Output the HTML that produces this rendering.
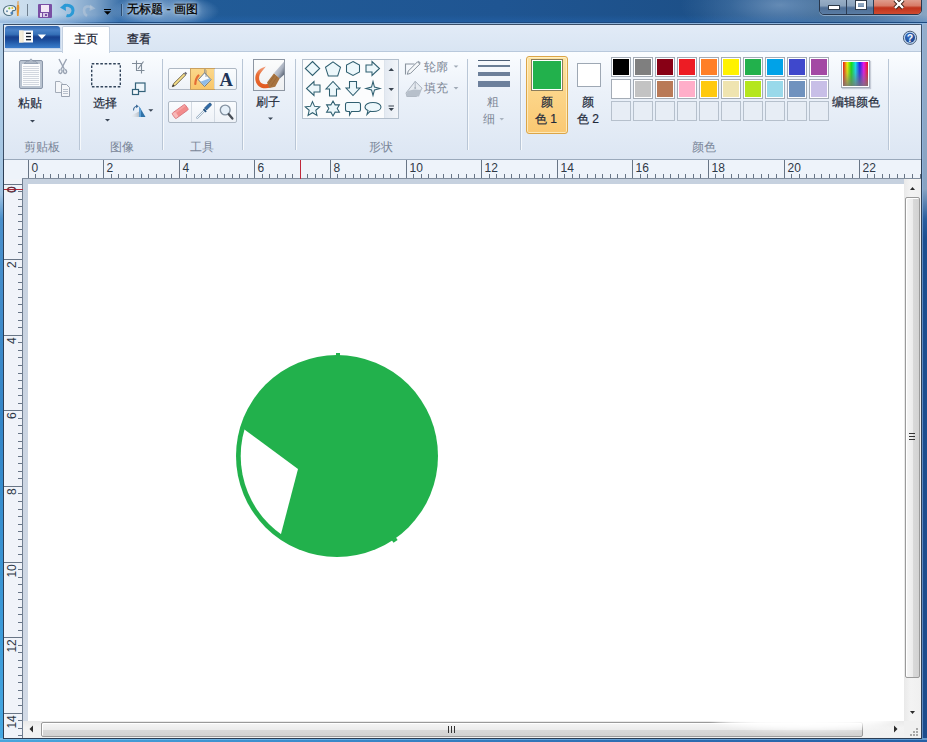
<!DOCTYPE html>
<html><head><meta charset="utf-8">
<style>
*{margin:0;padding:0;box-sizing:border-box}
html,body{width:927px;height:742px;overflow:hidden;background:#2a66a8;font-family:"Liberation Sans",sans-serif}
.a{position:absolute}
#title{left:0;top:0;width:927px;height:24px;background:linear-gradient(90deg,#d3e3f0 0px,#c0d6ea 50px,#7ea3c9 95px,#3f73aa 120px,#215b97 200px,#1f5592 500px,#1d5088 700px,#2a5a90 790px,#41688f 830px,#6b8db1 900px,#8aa6c3 927px)}
#frameL{left:0;top:24px;width:3px;height:718px;background:linear-gradient(180deg,#b5d0e8 0,#a2c4e2 170px,#4a90cc 195px,#3486c8 400px,#3c9ad8 600px,#46a8e2 718px)}
#frameR{left:922px;top:24px;width:5px;height:718px;background:linear-gradient(180deg,#95aecb 0,#87a3c2 165px,#2a5e9e 195px,#1d4f90 215px,#1c4c8c 742px);box-shadow:inset 1px 0 0 rgba(150,190,235,.55)}
#frameB{left:0;top:738px;width:927px;height:4px;background:linear-gradient(90deg,#48a6dc,#3a8ccc 300px,#2e70b4 600px,#2460a6 927px);box-shadow:inset 0 2px 0 rgba(160,210,245,.5)}
#ribbon{left:3px;top:24px;width:919px;height:136px;border:1px solid #3b4e66;border-bottom:none;border-radius:3px 3px 0 0;background:#dfe9f5}
#tabrow{left:4px;top:25px;width:917px;height:27px;background:linear-gradient(180deg,#e2ebf7,#d9e5f3);border-bottom:1px solid #b9c9dc}
#body{left:4px;top:52px;width:917px;height:107px;background:linear-gradient(180deg,#fbfdff 0,#ebf1f9 40px,#dce6f3 107px)}
#appbtn{left:5px;top:26px;width:55px;height:22px;border-radius:3px 3px 0 0;background:linear-gradient(180deg,#2f64ad 0,#4a82c8 18%,#3570b8 38%,#17408e 50%,#1a4a98 62%,#2d6bb9 85%,#3b7ccb 100%);box-shadow:1px 1px 0 #c2d4ea}
#tab1{left:62px;top:26px;width:48px;height:27px;border:1px solid #c3d0e0;border-bottom:none;border-radius:2px 2px 0 0;background:linear-gradient(180deg,#ffffff,#fbfdff)}
.tabt{font-size:12px;color:#1a2230;line-height:14px;-webkit-text-stroke:.25px #1a2230}
#ruler{left:4px;top:159px;width:917px;height:20px;background:#eef3fa;border-top:1px solid #9aa9bb}
#vruler{left:4px;top:179px;width:19px;height:559px;background:#f0f3f9;border-right:1px solid #717f91}
#work{left:23px;top:179px;width:881px;height:543px;background:linear-gradient(180deg,#c6d1df,#d2dae6)}
#canvas{left:28px;top:184px;width:876px;height:538px;background:#fff}
#vscroll{left:904px;top:179px;width:17px;height:543px;background:linear-gradient(90deg,#e9e9e9,#f3f3f3 40%,#f0f0f0)}
#hscroll{left:23px;top:721px;width:881px;height:17px;background:linear-gradient(180deg,#e9e9e9,#f3f3f3 40%,#f0f0f0)}
#grip{left:904px;top:721px;width:17px;height:17px;background:#f0f0f0}
.lbl{font-size:12px;color:#7a8698;line-height:14px;white-space:nowrap}
.txt{font-size:12px;color:#1e2a3a;line-height:14px;white-space:nowrap;-webkit-text-stroke:.2px #1e2a3a}
.pc{width:20px;height:20px;border:1px solid #a4acb6;background:#fff;padding:1px}.pc i{display:block;width:16px;height:16px}.pe{background:#e7edf5;border-color:#b6c0cc}
.sep{width:1px;height:91px;top:59px;background:#b9c6d6;box-shadow:1px 0 0 #f6f9fc}
</style></head><body>
<div id="title" class="a"></div>
<div class="a" style="left:0;top:0;width:927px;height:24px;background:linear-gradient(180deg,rgba(255,255,255,0) 0,rgba(255,255,255,0) 62%,rgba(40,110,190,0.3) 90%,rgba(40,110,190,0.3) 100%)"></div>
<div class="a" style="left:110px;top:-6px;width:110px;height:34px;border-radius:50%;background:radial-gradient(ellipse at center,rgba(190,215,240,0.55) 0,rgba(170,200,235,0.35) 45%,rgba(120,160,210,0) 70%)"></div>
<div class="a" style="left:680px;top:-30px;width:200px;height:70px;background:radial-gradient(closest-side,rgba(150,180,212,0.55) 0,rgba(120,160,200,0.25) 50%,rgba(120,160,200,0) 100%)"></div>
<div class="a" style="left:0;top:22px;width:927px;height:1px;background:linear-gradient(90deg,rgba(28,74,128,0) 0,rgba(28,74,128,0) 70px,rgba(28,74,128,1) 130px)"></div>
<div class="a" style="left:0;top:23px;width:927px;height:1px;background:linear-gradient(90deg,rgba(200,225,245,.6) 0,rgba(143,180,220,1) 130px)"></div>
<svg class="a" style="left:0;top:0" width="130" height="24">
 <!-- palette -->
 <path d="M10.5 5.5c3.2 0 5.2 1.6 5.2 3.6 0 1.3-1.2 1.6-2.2 1.5-1.1-.1-1.6.8-1 1.7.6 1-.2 3.2-3.1 3.2-3.6 0-5.9-2.2-5.9-5 0-2.9 3-5 7-5z" fill="#eef4f6" stroke="#4f6f80" stroke-width="1.1"/>
 <circle cx="9.3" cy="8.3" r="1.1" fill="#7cc04a"/><circle cx="12.3" cy="8" r="1" fill="#e8c430"/><circle cx="7" cy="11.3" r="1" fill="#6a8fb0"/><circle cx="11.6" cy="13" r="1.2" fill="#4f86c2"/>
 <path d="M17.6 1.5 L18.8 1.5 L19.3 8 L18.6 16 L17 16 L16.6 8 Z" fill="#e5932e"/>
 <path d="M17.4 1.3 L19 1.3 L19.1 5 L16.9 5 Z" fill="#d8b890"/>
 <rect x="27" y="4" width="1" height="12" fill="#6f8090"/>
 <!-- save -->
 <rect x="38" y="4" width="14" height="14" rx="1" fill="#7a4fa4"/>
 <rect x="41" y="5" width="8" height="7" fill="#f3e8f6"/>
 <rect x="40" y="13" width="2" height="4" fill="#e8dcef"/><rect x="43" y="13" width="5" height="4" fill="#d9c8e6"/><rect x="45" y="14" width="2" height="2" fill="#7a4fa4"/>
 <!-- undo -->
 <path d="M63.5 6.5 C67 4.2 73 5.5 73 10.5 C73 14.5 69.5 16.5 66.5 15.5" fill="none" stroke="#2b9ad6" stroke-width="3"/>
 <path d="M60 7.5 L65.5 3.5 L66 11 Z" fill="#2b9ad6"/>
 <!-- redo grey -->
 <path d="M92 8 C89 5.5 84 6 84 10.5 C84 13 85.5 15 87 16" fill="none" stroke="#b9c9d9" stroke-width="2.6" opacity="0.55"/>
 <path d="M95.5 8.5 L90 4.5 L89.5 11 Z" fill="#b9c9d9" opacity="0.55"/>
 <!-- dropdown -->
 <rect x="104" y="9" width="7" height="1" fill="#000"/>
 <path d="M104 11.3 L111 11.3 L107.5 14.8 Z" fill="#000"/>
 <rect x="121" y="4" width="1" height="12" fill="#2a4a70"/><rect x="122" y="4" width="1" height="12" fill="#8fb0d0" opacity=".6"/>
</svg>
<div class="a" style="left:127px;top:2px;font-size:12.4px;line-height:14px;color:#000;-webkit-text-stroke:.3px #000;white-space:nowrap;text-shadow:0 0 8px rgba(210,230,250,0.95),0 0 4px rgba(220,235,250,0.9),0 0 2px rgba(230,240,250,0.6)">无标题 - 画图</div>
<!-- window buttons -->
<div class="a" style="left:819px;top:-3px;width:103px;height:18px;border:1px solid #28374d;border-radius:0 0 5px 5px;overflow:hidden;box-shadow:0 1px 0 rgba(190,210,230,.55),inset 0 0 0 1px rgba(220,230,240,.35)">
 <div class="a" style="left:0;top:0;width:27px;height:17px;background:linear-gradient(180deg,#9db2c8 0,#8aa2bc 45%,#4f6f96 58%,#5b7ea6 100%);border-right:1px solid #2c3d55"></div>
 <div class="a" style="left:27px;top:0;width:27px;height:17px;background:linear-gradient(180deg,#9db2c8 0,#8aa2bc 45%,#4f6f96 58%,#5b7ea6 100%);border-right:1px solid #2c3d55"></div>
 <div class="a" style="left:54px;top:0;width:47px;height:17px;background:linear-gradient(180deg,#e2a89a 0,#d87c68 45%,#c0331c 58%,#d24e33 100%)"></div>
</div>
<svg class="a" style="left:819px;top:0" width="103" height="16">
 <rect x="9.5" y="5.5" width="11" height="4" fill="#fff" stroke="#2e3a48" stroke-width="1"/>
 <rect x="36.5" y="0.5" width="11" height="9" fill="none" stroke="#2e3a48" stroke-width="1"/>
 <rect x="38" y="2" width="8" height="6" fill="none" stroke="#fff" stroke-width="2"/>
 <path d="M76 0 L84 8 M84 0 L76 8" stroke="#3a2018" stroke-width="4.2"/>
 <path d="M76 0 L84 8 M84 0 L76 8" stroke="#fff" stroke-width="2.4"/>
</svg>
<div id="frameL" class="a"></div>
<div id="frameR" class="a"></div>
<div id="frameB" class="a"></div>
<div id="ribbon" class="a"></div>
<div id="tabrow" class="a"></div>
<div id="body" class="a"></div>
<div id="appbtn" class="a"></div>
<svg class="a" style="left:0;top:24px" width="70" height="30">
 <rect x="19" y="6.5" width="14" height="12" fill="#fbfcfd"/>
 <rect x="19" y="6.5" width="3.5" height="12" fill="#f5eedb"/>
 <rect x="22.5" y="6.5" width="1" height="12" fill="#e6dcc0"/>
 <rect x="26" y="8.6" width="5" height="1.4" fill="#1c2430"/><rect x="26" y="11.9" width="5" height="1.4" fill="#1c2430"/><rect x="26" y="15" width="5" height="1.4" fill="#1c2430"/>
 <path d="M37.7 10.6 L46 10.6 L41.85 14.9 Z" fill="#fff"/>
</svg>
<div id="tab1" class="a"></div>
<div class="a tabt" style="left:74px;top:32px">主页</div>
<div class="a tabt" style="left:127px;top:32px">查看</div>

<!-- ===== RIBBON BODY CONTENT ===== -->
<!-- separators -->
<div class="a sep" style="left:79px"></div>
<div class="a sep" style="left:162px"></div>
<div class="a sep" style="left:242px"></div>
<div class="a sep" style="left:295px"></div>
<div class="a sep" style="left:467px"></div>
<div class="a sep" style="left:520px"></div>
<div class="a sep" style="left:888px"></div>
<!-- group labels -->
<div class="a lbl" style="left:24px;top:140px">剪贴板</div>
<div class="a lbl" style="left:110px;top:140px">图像</div>
<div class="a lbl" style="left:190px;top:140px">工具</div>
<div class="a lbl" style="left:369px;top:140px">形状</div>
<div class="a lbl" style="left:692px;top:140px">颜色</div>
<!-- clipboard group -->
<svg class="a" style="left:0;top:52px" width="80" height="75">
 <rect x="19.5" y="8.5" width="23" height="28" rx="1.5" fill="#b9c3d0" stroke="#8a96a8"/>
 <rect x="22" y="12" width="18" height="22" fill="#fbfcfd"/>
 <g fill="#d2d7df"><rect x="23" y="14" width="16" height="1"/><rect x="23" y="16" width="16" height="1"/><rect x="23" y="18" width="16" height="1"/><rect x="23" y="20" width="16" height="1"/><rect x="23" y="22" width="16" height="1"/><rect x="23" y="24" width="16" height="1"/><rect x="23" y="26" width="16" height="1"/><rect x="23" y="28" width="16" height="1"/><rect x="23" y="30" width="16" height="1"/><rect x="23" y="32" width="16" height="1"/></g>
 <path d="M24 11.5 L27 9 L29 9 L31 6.8 L33 9 L35 9 L38 11.5 Z" fill="#aeb8c6" stroke="#8d99ab" stroke-width=".8"/>
 <path d="M30 68 L35 68 L32.5 70.5 Z" fill="#3a4656"/>
 <!-- scissors -->
 <g stroke="#98a2b2" stroke-width="1.4" fill="none"><path d="M59 7 L64.5 17.5"/><path d="M66.5 7 L61 17.5"/><path d="M60.5 17.5 C58.5 18 58.2 21.3 60.3 21.5 C62.2 21.7 62.5 18.5 61.5 17.5"/><path d="M65 17.5 C67 18 67.3 21.3 65.2 21.5 C63.3 21.7 63 18.5 64 17.5"/></g>
 <!-- copy -->
 <path d="M55.5 29.5 H60 L62 31.5 V40.5 H55.5 Z" fill="#f4f6f9" stroke="#a4acb8"/>
 <path d="M61.5 32.5 H66.5 L69.5 35.5 V44.5 H61.5 Z" fill="#f4f6f9" stroke="#9aa3b1"/>
 <g fill="#b8c0cc"><rect x="63" y="37" width="5" height="1"/><rect x="63" y="39" width="5" height="1"/><rect x="63" y="41" width="5" height="1"/></g>
</svg>
<div class="a txt" style="left:18px;top:96px">粘贴</div>

<!-- image group -->
<svg class="a" style="left:80px;top:52px" width="82" height="75">
 <rect x="11.7" y="11.7" width="28.6" height="23" fill="none" stroke="#34465c" stroke-width="1.4" stroke-dasharray="2.6 1.7"/>
 <path d="M25 67 L30 67 L27.5 69.5 Z" fill="#3a4656"/>
 <!-- crop -->
 <g stroke="#7f8b98" stroke-width="1.1" fill="none"><path d="M56.5 8.5 V18.5 H64.5"/><path d="M52 11.5 H61.5 V21.5"/><path d="M58 17 L63.5 9.5"/></g>
 <!-- resize -->
 <rect x="55.5" y="31" width="9.5" height="8.5" fill="#eef6fb" stroke="#33627a" stroke-width="1.2"/>
 <rect x="52.5" y="37.5" width="6" height="5" fill="#f4f9fc" stroke="#33627a" stroke-width="1.2"/>
 <!-- rotate -->
 <defs><linearGradient id="rg" x1="0" y1="0" x2="1" y2="0"><stop offset="0" stop-color="#ffffff" stop-opacity="0"/><stop offset="1" stop-color="#b9c0c8"/></linearGradient></defs>
 <path d="M48 65 L59 59.5 L59 65 Z" fill="url(#rg)"/>
 <path d="M59.3 65 L59.3 54.5 L65.5 65 Z" fill="#2f72a8"/>
 <path d="M59.3 65 L59.3 54.5 L61 57.5 L61 65 Z" fill="#5aa0d8"/>
 <path d="M53.5 58.5 C53.5 56 55 54.5 57 54.3" stroke="#3a6a98" stroke-width="1.1" fill="none"/>
 <path d="M56 52.5 L58.8 54.3 L56.2 56.2 Z" fill="#3a6a98"/>
 <path d="M68.3 57.3 L73.3 57.3 L70.8 59.7 Z" fill="#3a4656"/>
</svg>
<div class="a txt" style="left:93px;top:96px">选择</div>

<!-- tools group -->
<div class="a" style="left:168px;top:68px;width:69px;height:22px;border:1px solid #aeb8c4;border-radius:2px;background:linear-gradient(180deg,#fafcfe,#eef2f7)"></div>
<div class="a" style="left:168px;top:101px;width:69px;height:22px;border:1px solid #aeb8c4;border-radius:2px;background:linear-gradient(180deg,#fafcfe,#eef2f7)"></div>
<div class="a" style="left:190px;top:68px;width:25px;height:22px;border:1px solid #c9a060;background:linear-gradient(180deg,#fbd78a,#f8c66a)"></div>
<div class="a" style="left:191px;top:102px;width:1px;height:20px;background:#d3dae3"></div>
<div class="a" style="left:214px;top:102px;width:1px;height:20px;background:#d3dae3"></div>
<div class="a" style="left:214px;top:69px;width:1px;height:20px;background:#d3dae3"></div>
<svg class="a" style="left:160px;top:52px" width="85" height="75">
 <!-- pencil -->
 <path d="M12.3 34.7 L13.6 31.6 L24 21.3 L25.7 23 L15.4 33.4 Z" fill="#f6e08a" stroke="#4a3e2a" stroke-width=".75" stroke-linejoin="round"/>
 <path d="M12.3 34.7 L13 32.6 L14.4 34 Z" fill="#222"/>
 <path d="M24 21.3 L25.5 19.8 L27.2 21.5 L25.7 23 Z" fill="#707078"/>
 <!-- fill bucket -->
 <path d="M38.5 23.5 C36.5 25.5 35.5 28.5 35.3 32" stroke="#e05a28" stroke-width="2.2" fill="none" stroke-linecap="round" opacity=".85"/>
 <path d="M44.6 20.8 L51 27.7 L44.6 34.5 L38.3 27.7 Z" fill="#f6f9fc" stroke="#5a6e80" stroke-width=".9"/>
 <path d="M40.5 29.8 L49.6 26.2 L50.3 27.7 L44.6 33.7 Z" fill="#8fbbe8"/>
 <path d="M44.6 21 L44.6 17.5 C45.5 17.3 46 18 46 19 L46 25" stroke="#7a8088" stroke-width=".7" fill="none"/>
 <!-- A -->
 <text x="59.5" y="34" font-family="Liberation Serif" font-weight="bold" font-size="18.5" fill="#1e3356">A</text>
 <!-- eraser -->
 <g transform="translate(20.2 59.5) rotate(-36)"><rect x="-8" y="-3.3" width="16" height="6.6" rx="1.3" fill="#f28b8b" stroke="#d66e76" stroke-width=".8"/><rect x="-7.6" y="-2.9" width="3.5" height="5.8" rx="1" fill="#f8c4c4" opacity=".8"/><rect x="-4" y="-2.9" width="11.5" height="1.8" fill="#f7b0b0" opacity=".6"/></g>
 <!-- picker -->
 <path d="M37.2 65.8 L46 57" stroke="#9cb0c4" stroke-width="2.2" stroke-linecap="round"/>
 <path d="M37.2 65.8 L46 57" stroke="#f4f8fb" stroke-width="1" stroke-linecap="round"/>
 <path d="M44.5 56 L49 51.5 C50.5 50.5 52 52 51 53.5 L46.5 58 Z" fill="#2e6aa8" stroke="#23507e" stroke-width=".8"/>
 <path d="M43.5 57.2 L46.2 59.8" stroke="#23507e" stroke-width="1.6"/>
 <!-- magnifier -->
 <circle cx="65.2" cy="58" r="4.9" fill="#e6f0f9" stroke="#8593a2" stroke-width="1.4"/>
 <path d="M68.8 62.2 L72.4 66.6" stroke="#484e56" stroke-width="2.3" stroke-linecap="round"/>
</svg>

<!-- brushes -->
<div class="a" style="left:253px;top:59px;width:32px;height:32px;border:1px solid #8d96a2;background:linear-gradient(180deg,#fbfcfc,#eef0f2)"></div>
<svg class="a" style="left:253px;top:59px" width="32" height="32">
 <defs><linearGradient id="fer" x1="0" y1="0" x2="1" y2="1"><stop offset="0" stop-color="#e8ecf2"/><stop offset=".6" stop-color="#aab2c0"/><stop offset="1" stop-color="#3a4658"/></linearGradient>
 <linearGradient id="strk" x1="0" y1="0" x2="0" y2="1"><stop offset="0" stop-color="#f0a080"/><stop offset=".4" stop-color="#e86a30"/><stop offset="1" stop-color="#e25a20"/></linearGradient></defs>
 <path d="M12.8 7.6 C9 8.5 5.5 10.5 3.5 14 C1.5 18 2 23 5 26.5 C8 29.5 13 30 17.5 28.5 L16 24.5 C12 26 8.5 25 7 22.5 C5.5 20 5.8 16 8 13.5 C9.5 11.5 11.5 9.8 12.8 7.6 Z" fill="url(#strk)"/>
 <path d="M14 23.5 L21 14.2 L26.8 19.2 L22.2 27.8 L16.5 29 Z" fill="#a87440"/>
 <path d="M15.5 25 L21.5 16.5 M18 27 L24 18" stroke="#8a5a2a" stroke-width=".7" opacity=".6"/>
 <path d="M21 13.9 L31.2 2.5 L31.2 15.6 L26.8 19.4 Z" fill="url(#fer)"/>
</svg>
<div class="a txt" style="left:256px;top:95px">刷子</div>
<svg class="a" style="left:265px;top:114px" width="12" height="8"><path d="M3 3.5 L8 3.5 L5.5 6 Z" fill="#3a4656"/></svg>

<!-- shapes gallery -->
<div class="a" style="left:302px;top:59px;width:97px;height:60px;border:1px solid #b3bfcc;background:#fbfcfd"></div>
<div class="a" style="left:384px;top:60px;width:14px;height:58px;background:linear-gradient(90deg,#e4eaf2,#f2f5f9);border-left:1px solid #dde4ec"></div>
<svg class="a" style="left:295px;top:52px" width="110" height="72">
 <g fill="#ecf7fb" stroke="#2f5f70" stroke-width="1.05" stroke-linejoin="miter">
 <!-- row1 -->
 <path d="M17.5 9.5 L24.7 16.5 L17.5 23.5 L10.3 16.5 Z"/>
 <path d="M38 9.8 L45.5 15.3 L42.7 24 L33.3 24 L30.5 15.3 Z"/>
 <path d="M58 9.5 L64.5 13 L64.5 20 L58 23.5 L51.5 20 L51.5 13 Z"/>
 <path d="M71 13 L77 13 L77 9.5 L84.5 16.5 L77 23.5 L77 20 L71 20 Z"/>
 <!-- row2 -->
 <path d="M25 33 L19 33 L19 29.5 L11.5 36.5 L19 43.5 L19 40 L25 40 Z"/>
 <path d="M34.5 44 L34.5 37 L31 37 L38 29.5 L45 37 L41.5 37 L41.5 44 Z"/>
 <path d="M54.5 29.5 L54.5 36 L51 36 L58 43.5 L65 36 L61.5 36 L61.5 29.5 Z"/>
 <path d="M78.00 29.50 L79.48 35.02 L85.00 36.50 L79.48 37.98 L78.00 43.50 L76.52 37.98 L71.00 36.50 L76.52 35.02 Z"/>
 <!-- row3 -->
 <path d="M17.50 49.60 L19.56 54.37 L24.73 54.85 L20.83 58.28 L21.97 63.35 L17.50 60.70 L13.03 63.35 L14.17 58.28 L10.27 54.85 L15.44 54.37 Z"/>
 <path d="M38.00 49.10 L40.10 52.86 L44.41 52.80 L42.20 56.50 L44.41 60.20 L40.10 60.14 L38.00 63.90 L35.90 60.14 L31.59 60.20 L33.80 56.50 L31.59 52.80 L35.90 52.86 Z"/>
 <path d="M52.5 50.5 H63.5 Q65.5 50.5 65.5 52.5 V57.5 Q65.5 59.5 63.5 59.5 H56.5 L54.5 63 L54.5 59.5 H52.5 Q50.5 59.5 50.5 57.5 V52.5 Q50.5 50.5 52.5 50.5 Z"/>
 <path d="M78 50.5 C82.5 50.5 86 52.5 86 55 C86 57.7 82.5 59.5 78 59.5 C77 59.5 76 59.4 75.2 59.2 L72 62.5 L73 58.5 C71 57.7 70 56.5 70 55 C70 52.5 73.5 50.5 78 50.5 Z"/>
 </g>
 <g fill="#3a4450">
 <path d="M93.5 19 L99 19 L96.25 16 Z"/>
 <path d="M93.5 36 L99 36 L96.25 39 Z"/>
 <rect x="93.5" y="53.5" width="5.5" height="1"/>
 <path d="M93.5 56 L99 56 L96.25 59 Z"/>
 </g>
</svg>
<!-- outline / fill -->
<svg class="a" style="left:400px;top:56px" width="70" height="45">
 <path d="M5.5 18.5 V8 H14.5" fill="none" stroke="#8a949f" stroke-width="1.1"/>
 <path d="M7.3 18.3 L8.3 15 L17.5 5.8 L19.8 8.1 L10.6 17.3 Z" fill="#f6f8fa" stroke="#8a949f" stroke-width="1"/>
 <path d="M17.5 5.8 L18.6 4.7 L20.9 7 L19.8 8.1 Z" fill="#9aa3ad"/>
 <path d="M53.6 9.4 L58.4 9.4 L56 11.8 Z" fill="#a0aab6"/>
 <path d="M15.2 25.3 L22 32.2 L16.5 40.5 L7 40.5 L6 37 Z" fill="#e6ebf1" stroke="#a9b2bd" stroke-width="1"/>
 <path d="M6 40.5 L7.5 35 L14 33.5 L21.5 34 L19 40.5 Z" fill="#b7c0cb"/>
 <path d="M15.2 25.3 V31.5" stroke="#a9b2bd" stroke-width=".9"/><circle cx="15.2" cy="32" r="1" fill="#a9b2bd"/>
 <path d="M53.6 31 L58.4 31 L56 33.4 Z" fill="#a0aab6"/>
</svg>
<div class="a lbl" style="left:424px;top:60px;color:#7d8796">轮廓</div>
<div class="a lbl" style="left:424px;top:81px;color:#7d8796">填充</div>
<!-- size -->
<svg class="a" style="left:470px;top:52px" width="50" height="75">
 <rect x="8" y="8" width="32" height="1" fill="#4e6178"/>
 <rect x="8" y="13" width="32" height="2" fill="#6a7e96"/>
 <rect x="8" y="20" width="32" height="4" fill="#6c7f9a"/>
 <rect x="8" y="29" width="32" height="6" fill="#6d809c"/>
 <path d="M29.5 66 L34 66 L31.75 68.5 Z" fill="#a9b3bf"/>
</svg>
<div class="a lbl" style="left:487px;top:95px;color:#7d8796">粗</div>
<div class="a lbl" style="left:483px;top:112px;color:#7d8796">细</div>

<!-- colors -->
<div class="a" style="left:526px;top:56px;width:42px;height:78px;border:1px solid #dca548;border-radius:3px;background:linear-gradient(180deg,#fde3a2 0,#fcd68a 45%,#fac872 100%);box-shadow:inset 0 0 0 1px rgba(255,245,210,.7)"></div>
<div class="a" style="left:531px;top:59px;width:32px;height:32px;border:1px solid #8b7d5c;background:#fff;padding:1px"><div style="width:28px;height:28px;background:#22b14c"></div></div>
<div class="a txt" style="left:541px;top:95px">颜</div>
<div class="a txt" style="left:535px;top:112px">色 1</div>
<div class="a" style="left:577px;top:63px;width:24px;height:24px;border:1px solid #9ea8b4;background:#fff"></div>
<div class="a txt" style="left:582px;top:95px">颜</div>
<div class="a txt" style="left:577px;top:112px">色 2</div>
<div class="a pc" style="left:611px;top:57px"><i style="background:#000000"></i></div>
<div class="a pc" style="left:633px;top:57px"><i style="background:#7f7f7f"></i></div>
<div class="a pc" style="left:655px;top:57px"><i style="background:#880015"></i></div>
<div class="a pc" style="left:677px;top:57px"><i style="background:#ed1c24"></i></div>
<div class="a pc" style="left:699px;top:57px"><i style="background:#ff7f27"></i></div>
<div class="a pc" style="left:721px;top:57px"><i style="background:#fff200"></i></div>
<div class="a pc" style="left:743px;top:57px"><i style="background:#22b14c"></i></div>
<div class="a pc" style="left:765px;top:57px"><i style="background:#00a2e8"></i></div>
<div class="a pc" style="left:787px;top:57px"><i style="background:#3f48cc"></i></div>
<div class="a pc" style="left:809px;top:57px"><i style="background:#a349a4"></i></div>
<div class="a pc" style="left:611px;top:79px"><i style="background:#ffffff"></i></div>
<div class="a pc" style="left:633px;top:79px"><i style="background:#c3c3c3"></i></div>
<div class="a pc" style="left:655px;top:79px"><i style="background:#b97a57"></i></div>
<div class="a pc" style="left:677px;top:79px"><i style="background:#ffaec9"></i></div>
<div class="a pc" style="left:699px;top:79px"><i style="background:#ffc90e"></i></div>
<div class="a pc" style="left:721px;top:79px"><i style="background:#efe4b0"></i></div>
<div class="a pc" style="left:743px;top:79px"><i style="background:#b5e61d"></i></div>
<div class="a pc" style="left:765px;top:79px"><i style="background:#99d9ea"></i></div>
<div class="a pc" style="left:787px;top:79px"><i style="background:#7092be"></i></div>
<div class="a pc" style="left:809px;top:79px"><i style="background:#c8bfe7"></i></div>
<div class="a pc pe" style="left:611px;top:101px"></div>
<div class="a pc pe" style="left:633px;top:101px"></div>
<div class="a pc pe" style="left:655px;top:101px"></div>
<div class="a pc pe" style="left:677px;top:101px"></div>
<div class="a pc pe" style="left:699px;top:101px"></div>
<div class="a pc pe" style="left:721px;top:101px"></div>
<div class="a pc pe" style="left:743px;top:101px"></div>
<div class="a pc pe" style="left:765px;top:101px"></div>
<div class="a pc pe" style="left:787px;top:101px"></div>
<div class="a pc pe" style="left:809px;top:101px"></div>
<div class="a" style="left:841px;top:60px;width:29px;height:28px;border:1px solid #a3acb8;background:#fff;padding:1px;box-shadow:1px 1px 1px rgba(120,130,150,.35)"><div style="width:25px;height:24px;background:linear-gradient(180deg,rgba(128,128,128,0) 0,rgba(128,128,128,0.25) 45%,rgba(120,120,120,0.85) 100%),linear-gradient(90deg,#f01010 0,#f0f000 17%,#10e010 33%,#10e0f0 50%,#2020f0 67%,#f010f0 83%,#f01010 100%)"></div></div>
<div class="a txt" style="left:832px;top:95px">编辑颜色</div>
<!-- help -->
<svg class="a" style="left:901px;top:29px" width="18" height="18">
 <defs><radialGradient id="hg" cx=".4" cy=".35" r=".7"><stop offset="0" stop-color="#3a72c8"/><stop offset="1" stop-color="#173f88"/></radialGradient></defs>
 <circle cx="9" cy="8.8" r="6.6" fill="#bcd4ee" stroke="#4c5e78" stroke-width="1"/>
 <circle cx="9" cy="8.8" r="5" fill="url(#hg)"/>
 <text x="9" y="12.6" text-anchor="middle" font-family="Liberation Sans" font-weight="bold" font-size="10.5" fill="#f4f8ff">?</text>
</svg>

<div id="ruler" class="a"></div>
<div id="vruler" class="a"></div>
<div id="work" class="a"></div>
<div id="canvas" class="a"></div>
<div id="vscroll" class="a"></div>
<div id="hscroll" class="a"></div>
<div id="grip" class="a"></div>
<svg class="a" style="left:0;top:159px" width="927" height="20" shape-rendering="crispEdges">
<g stroke="#687586" stroke-width="1"><path d="M28.5 1 V19"/><path d="M35.5 15 V19"/><path d="M43.5 15 V19"/><path d="M50.5 15 V19"/><path d="M58.5 15 V19"/><path d="M65.5 15 V19"/><path d="M73.5 15 V19"/><path d="M80.5 15 V19"/><path d="M88.5 15 V19"/><path d="M96.5 15 V19"/><path d="M103.5 1 V19"/><path d="M111.5 15 V19"/><path d="M118.5 15 V19"/><path d="M126.5 15 V19"/><path d="M133.5 15 V19"/><path d="M141.5 15 V19"/><path d="M148.5 15 V19"/><path d="M156.5 15 V19"/><path d="M164.5 15 V19"/><path d="M171.5 15 V19"/><path d="M179.5 1 V19"/><path d="M186.5 15 V19"/><path d="M194.5 15 V19"/><path d="M201.5 15 V19"/><path d="M209.5 15 V19"/><path d="M217.5 15 V19"/><path d="M224.5 15 V19"/><path d="M232.5 15 V19"/><path d="M239.5 15 V19"/><path d="M247.5 15 V19"/><path d="M254.5 1 V19"/><path d="M262.5 15 V19"/><path d="M269.5 15 V19"/><path d="M277.5 15 V19"/><path d="M285.5 15 V19"/><path d="M292.5 15 V19"/><path d="M300.5 15 V19"/><path d="M307.5 15 V19"/><path d="M315.5 15 V19"/><path d="M322.5 15 V19"/><path d="M330.5 1 V19"/><path d="M337.5 15 V19"/><path d="M345.5 15 V19"/><path d="M353.5 15 V19"/><path d="M360.5 15 V19"/><path d="M368.5 15 V19"/><path d="M375.5 15 V19"/><path d="M383.5 15 V19"/><path d="M390.5 15 V19"/><path d="M398.5 15 V19"/><path d="M406.5 1 V19"/><path d="M413.5 15 V19"/><path d="M421.5 15 V19"/><path d="M428.5 15 V19"/><path d="M436.5 15 V19"/><path d="M443.5 15 V19"/><path d="M451.5 15 V19"/><path d="M458.5 15 V19"/><path d="M466.5 15 V19"/><path d="M474.5 15 V19"/><path d="M481.5 1 V19"/><path d="M489.5 15 V19"/><path d="M496.5 15 V19"/><path d="M504.5 15 V19"/><path d="M511.5 15 V19"/><path d="M519.5 15 V19"/><path d="M526.5 15 V19"/><path d="M534.5 15 V19"/><path d="M542.5 15 V19"/><path d="M549.5 15 V19"/><path d="M557.5 1 V19"/><path d="M564.5 15 V19"/><path d="M572.5 15 V19"/><path d="M579.5 15 V19"/><path d="M587.5 15 V19"/><path d="M595.5 15 V19"/><path d="M602.5 15 V19"/><path d="M610.5 15 V19"/><path d="M617.5 15 V19"/><path d="M625.5 15 V19"/><path d="M632.5 1 V19"/><path d="M640.5 15 V19"/><path d="M647.5 15 V19"/><path d="M655.5 15 V19"/><path d="M663.5 15 V19"/><path d="M670.5 15 V19"/><path d="M678.5 15 V19"/><path d="M685.5 15 V19"/><path d="M693.5 15 V19"/><path d="M700.5 15 V19"/><path d="M708.5 1 V19"/><path d="M715.5 15 V19"/><path d="M723.5 15 V19"/><path d="M731.5 15 V19"/><path d="M738.5 15 V19"/><path d="M746.5 15 V19"/><path d="M753.5 15 V19"/><path d="M761.5 15 V19"/><path d="M768.5 15 V19"/><path d="M776.5 15 V19"/><path d="M784.5 1 V19"/><path d="M791.5 15 V19"/><path d="M799.5 15 V19"/><path d="M806.5 15 V19"/><path d="M814.5 15 V19"/><path d="M821.5 15 V19"/><path d="M829.5 15 V19"/><path d="M836.5 15 V19"/><path d="M844.5 15 V19"/><path d="M852.5 15 V19"/><path d="M859.5 1 V19"/><path d="M867.5 15 V19"/><path d="M874.5 15 V19"/><path d="M882.5 15 V19"/><path d="M889.5 15 V19"/><path d="M897.5 15 V19"/><path d="M904.5 15 V19"/><path d="M912.5 15 V19"/><path d="M920.5 15 V19"/></g>
<rect x="22" y="19" width="899" height="1" fill="#808c9c"/>
<g font-family="Liberation Sans" font-size="12" fill="#2e3846" shape-rendering="auto"><text x="31.5" y="12.8">0</text><text x="106.5" y="12.8">2</text><text x="182.5" y="12.8">4</text><text x="257.5" y="12.8">6</text><text x="333.5" y="12.8">8</text><text x="409.5" y="12.8">10</text><text x="484.5" y="12.8">12</text><text x="560.5" y="12.8">14</text><text x="635.5" y="12.8">16</text><text x="711.5" y="12.8">18</text><text x="787.5" y="12.8">20</text><text x="862.5" y="12.8">22</text></g>
<rect x="300" y="1" width="1" height="19" fill="#c0283a"/>
</svg>
<svg class="a" style="left:0;top:0" width="30" height="742" shape-rendering="crispEdges">
<g stroke="#687586" stroke-width="1"><path d="M4 184.5 H22"/><path d="M18 191.5 H22"/><path d="M18 199.5 H22"/><path d="M18 206.5 H22"/><path d="M18 214.5 H22"/><path d="M18 221.5 H22"/><path d="M18 229.5 H22"/><path d="M18 236.5 H22"/><path d="M18 244.5 H22"/><path d="M18 252.5 H22"/><path d="M4 259.5 H22"/><path d="M18 267.5 H22"/><path d="M18 274.5 H22"/><path d="M18 282.5 H22"/><path d="M18 289.5 H22"/><path d="M18 297.5 H22"/><path d="M18 304.5 H22"/><path d="M18 312.5 H22"/><path d="M18 320.5 H22"/><path d="M18 327.5 H22"/><path d="M4 335.5 H22"/><path d="M18 342.5 H22"/><path d="M18 350.5 H22"/><path d="M18 357.5 H22"/><path d="M18 365.5 H22"/><path d="M18 373.5 H22"/><path d="M18 380.5 H22"/><path d="M18 388.5 H22"/><path d="M18 395.5 H22"/><path d="M18 403.5 H22"/><path d="M4 410.5 H22"/><path d="M18 418.5 H22"/><path d="M18 425.5 H22"/><path d="M18 433.5 H22"/><path d="M18 441.5 H22"/><path d="M18 448.5 H22"/><path d="M18 456.5 H22"/><path d="M18 463.5 H22"/><path d="M18 471.5 H22"/><path d="M18 478.5 H22"/><path d="M4 486.5 H22"/><path d="M18 493.5 H22"/><path d="M18 501.5 H22"/><path d="M18 509.5 H22"/><path d="M18 516.5 H22"/><path d="M18 524.5 H22"/><path d="M18 531.5 H22"/><path d="M18 539.5 H22"/><path d="M18 546.5 H22"/><path d="M18 554.5 H22"/><path d="M4 562.5 H22"/><path d="M18 569.5 H22"/><path d="M18 577.5 H22"/><path d="M18 584.5 H22"/><path d="M18 592.5 H22"/><path d="M18 599.5 H22"/><path d="M18 607.5 H22"/><path d="M18 614.5 H22"/><path d="M18 622.5 H22"/><path d="M18 630.5 H22"/><path d="M4 637.5 H22"/><path d="M18 645.5 H22"/><path d="M18 652.5 H22"/><path d="M18 660.5 H22"/><path d="M18 667.5 H22"/><path d="M18 675.5 H22"/><path d="M18 682.5 H22"/><path d="M18 690.5 H22"/><path d="M18 698.5 H22"/><path d="M18 705.5 H22"/><path d="M4 713.5 H22"/><path d="M18 720.5 H22"/><path d="M18 728.5 H22"/><path d="M18 735.5 H22"/></g>
<g font-family="Liberation Sans" font-size="12" fill="#2e3846" shape-rendering="auto"><text transform="translate(16 186.2) rotate(-90)" text-anchor="end">0</text><text transform="translate(16 261.2) rotate(-90)" text-anchor="end">2</text><text transform="translate(16 337.2) rotate(-90)" text-anchor="end">4</text><text transform="translate(16 412.2) rotate(-90)" text-anchor="end">6</text><text transform="translate(16 488.2) rotate(-90)" text-anchor="end">8</text><text transform="translate(16 564.2) rotate(-90)" text-anchor="end">10</text><text transform="translate(16 639.2) rotate(-90)" text-anchor="end">12</text><text transform="translate(16 715.2) rotate(-90)" text-anchor="end">14</text></g>
<rect x="4" y="189" width="19" height="1" fill="#b02838"/>
<ellipse cx="11.5" cy="189.5" rx="3.7" ry="2.1" fill="none" stroke="#7a2030" stroke-width=".9" shape-rendering="auto"/>
</svg>
<!-- scrollbars -->
<svg class="a" style="left:904px;top:179px" width="17" height="543">
 <path d="M6 11 L11 11 L8.5 8 Z" fill="#2a2a2a"/>
 <path d="M6 532 L11 532 L8.5 535 Z" fill="#2a2a2a"/>
</svg>
<div class="a" style="left:905px;top:197px;width:15px;height:481px;border:1px solid #9a9a9a;border-radius:2px;background:linear-gradient(90deg,#f6f6f6 0,#ececec 50%,#d9d9d9 51%,#d2d2d2 100%);box-shadow:inset 1px 1px 0 #fff"></div>
<svg class="a" style="left:905px;top:430px" width="15" height="12"><g fill="#333"><rect x="4" y="3" width="6" height="1"/><rect x="4" y="6" width="6" height="1"/><rect x="4" y="9" width="6" height="1"/></g></svg>
<svg class="a" style="left:23px;top:721px" width="881" height="17">
 <path d="M10 3 L10 10 L6.5 6.5 Z" fill="#2a2a2a" transform="translate(0 1.5)"/>
 <path d="M871 3 L871 10 L874.5 6.5 Z" fill="#2a2a2a" transform="translate(0 1.5)"/>
</svg>
<div class="a" style="left:41px;top:722px;width:822px;height:15px;border:1px solid #9a9a9a;border-radius:2px;background:linear-gradient(180deg,#f6f6f6 0,#ececec 50%,#d9d9d9 51%,#d2d2d2 100%);box-shadow:inset 1px 1px 0 #fff"></div>
<svg class="a" style="left:440px;top:722px" width="20" height="15"><g fill="#333"><rect x="8" y="4" width="1" height="7"/><rect x="11" y="4" width="1" height="7"/><rect x="14" y="4" width="1" height="7"/></g></svg>
<svg class="a" style="left:904px;top:722px" width="17" height="16"><g fill="#a7a7a7"><rect x="12" y="6" width="2" height="2"/><rect x="9" y="9" width="2" height="2"/><rect x="12" y="9" width="2" height="2"/><rect x="6" y="12" width="2" height="2"/><rect x="9" y="12" width="2" height="2"/><rect x="12" y="12" width="2" height="2"/></g></svg>


<svg class="a" style="left:0;top:0" width="927" height="742">
<defs><clipPath id="cc"><circle cx="337" cy="456" r="96.3"/></clipPath></defs>
<circle cx="337" cy="456" r="101" fill="#22b14c"/>
<polygon points="298,469 192,391 140,480 264,599" fill="#fff" clip-path="url(#cc)"/>
<rect x="336" y="353" width="4" height="3" fill="#22b14c"/><rect x="392" y="539" width="5" height="3" fill="#22b14c" transform="rotate(-35 394 540)"/>
</svg>

<div class="a" style="left:712px;top:704px;width:185px;height:25px;border-radius:50%;background:#fff;filter:blur(3px)"></div>
<div class="a" style="left:3px;top:159px;width:1px;height:580px;background:#2c3e55"></div>
<div class="a" style="left:921px;top:159px;width:1px;height:580px;background:#2c3e55"></div>
<div class="a" style="left:3px;top:738px;width:919px;height:1px;background:#2c3e55"></div>
</body></html>
